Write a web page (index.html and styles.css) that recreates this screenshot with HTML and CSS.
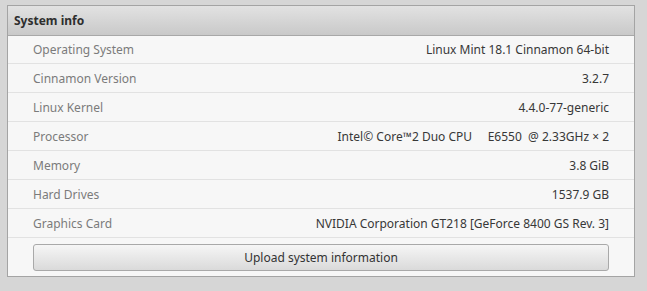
FILE: index.html
```html
<!DOCTYPE html>
<html lang="en">
<head>
    <meta charset="UTF-8">
    <title>System info</title>
    <link rel="stylesheet" href="styles.css">
</head>
<body>

<div class="panel">
    <div class="panel-header">System info</div>
    <div class="rows">
        <div class="row"><span class="label">Operating System</span><span class="value">Linux Mint 18.1 Cinnamon 64-bit</span></div>
        <div class="row"><span class="label">Cinnamon Version</span><span class="value">3.2.7</span></div>
        <div class="row"><span class="label">Linux Kernel</span><span class="value">4.4.0-77-generic</span></div>
        <div class="row"><span class="label">Processor</span><span class="value">Intel© Core™2 Duo CPU&nbsp;&nbsp;&nbsp;&nbsp; E6550&nbsp; @ 2.33GHz × 2</span></div>
        <div class="row"><span class="label">Memory</span><span class="value">3.8 GiB</span></div>
        <div class="row"><span class="label">Hard Drives</span><span class="value">1537.9 GB</span></div>
        <div class="row"><span class="label">Graphics Card</span><span class="value">NVIDIA Corporation GT218 [GeForce 8400 GS Rev. 3]</span></div>
    </div>
    <div class="actions">
        <button class="upload-btn">Upload system information</button>
    </div>
</div>

</body>
</html>
```

FILE: styles.css
```css
* {
    margin: 0;
    padding: 0;
    box-sizing: border-box;
}

body {
    font-family: 'Noto Sans', sans-serif;
    font-size: 12px;
    background-color: #d6d6d6;
    padding: 5px 0 0 7px;
}

.panel {
    width: 628px;
    border: 1px solid #a4a4a4;
    background: #f7f7f7;
}

.panel-header {
    height: 30px;
    line-height: 29px;
    padding-left: 6px;
    font-weight: bold;
    color: #2e2e2e;
    background: linear-gradient(#e2e2e2, #c9c9c9);
    border-bottom: 1px solid #a8a8a8;
}

.row {
    display: flex;
    justify-content: space-between;
    align-items: center;
    height: 29px;
    padding: 0 25px;
    border-bottom: 1px solid #e2e2e2;
}

.row:first-child {
    height: 28px;
}

.label {
    color: #7b7b7b;
}

.value {
    color: #383838;
    white-space: pre;
}

.actions {
    padding: 6px 25px 5px 25px;
}

.upload-btn {
    display: block;
    width: 100%;
    height: 27px;
    font-family: 'Noto Sans', sans-serif;
    font-size: 12px;
    color: #333;
    border: 1px solid #a9a9a9;
    border-radius: 3px;
    background: linear-gradient(#f6f6f6, #dadada);
}
```
